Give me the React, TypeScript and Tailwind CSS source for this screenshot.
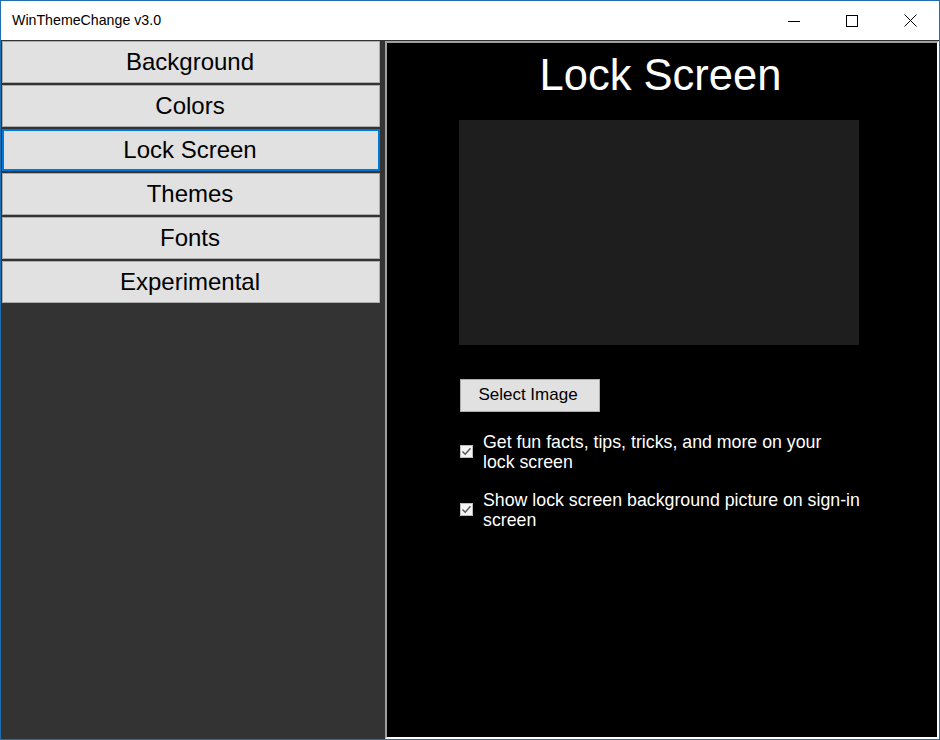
import React from "react";

const navItems = ["Background", "Colors", "Lock Screen", "Themes", "Fonts", "Experimental"];

function CheckBox() {
  return (
    <div className="w-[13px] h-[13px] bg-[#f4f4f4] border border-[#bcbcbc] flex items-center justify-center shrink-0">
      <svg width="11" height="11" viewBox="0 0 11 11">
        <path d="M1.5 5.5 L4.2 8.3 L9.5 2.2" fill="none" stroke="#555555" strokeWidth="1.4" />
      </svg>
    </div>
  );
}

export default function App() {
  return (
    <div
      className="w-[940px] h-[740px] border border-[#1f6fb2] flex flex-col bg-white overflow-hidden"
      style={{ fontFamily: '"Liberation Sans", Arial, sans-serif' }}
    >
      {/* Title bar */}
      <div className="h-[39px] flex items-center bg-white shrink-0">
        <div className="pl-[11px] text-[14.2px] text-black flex-1">WinThemeChange v3.0</div>
        <div className="flex h-full">
          <div className="w-[58px] h-full flex items-center justify-center">
            <svg width="12" height="12" viewBox="0 0 12 12">
              <path d="M0 6.5 H12" stroke="#000" strokeWidth="1" />
            </svg>
          </div>
          <div className="w-[58px] h-full flex items-center justify-center">
            <svg width="12" height="12" viewBox="0 0 12 12">
              <rect x="0.5" y="0.5" width="11" height="11" fill="none" stroke="#000" strokeWidth="1" />
            </svg>
          </div>
          <div className="w-[58px] h-full flex items-center justify-center">
            <svg width="13" height="13" viewBox="0 0 13 13">
              <path d="M0.5 0.5 L12.5 12.5 M12.5 0.5 L0.5 12.5" stroke="#000" strokeWidth="1" />
            </svg>
          </div>
        </div>
      </div>

      {/* Body */}
      <div className="flex-1 flex bg-[#333333] pt-[1px]">
        {/* Left nav */}
        <div className="w-[384px] shrink-0 flex flex-col gap-[2px] pl-[1px]">
          {navItems.map((item) => (
            <div
              key={item}
              className={
                item === "Lock Screen"
                  ? "w-[378px] h-[42px] bg-[#e1e1e1] border-2 border-[#0078d7] flex items-center justify-center pr-[2px] text-[24px] text-black"
                  : "w-[378px] h-[42px] bg-[#e1e1e1] border border-[#adadad] flex items-center justify-center pr-[2px] text-[24px] text-black"
              }
            >
              {item}
            </div>
          ))}
        </div>

        {/* Right panel */}
        <div className="flex-1 bg-black border-2 border-t-[#a0a0a0] border-l-[#a0a0a0] border-b-white border-r-white flex flex-col">
          <div className="mt-[11px] pr-[3px] text-[43.5px] leading-none text-white text-center">Lock Screen</div>
          <div className="mt-[22px] ml-[72px] w-[400px] h-[225px] bg-[#1e1e1e]" />
          <div className="mt-[34px] ml-[73px] w-[140px] h-[33px] bg-[#e1e1e1] border border-[#adadad] flex items-center justify-center pr-[4px] text-[17px] text-black">
            Select Image
          </div>
          <div className="mt-[20px] ml-[73px] flex flex-col gap-[18px]">
            <div className="flex items-center gap-[10px]">
              <CheckBox />
              <div className="text-[17.75px] leading-[20px] text-white">
                Get fun facts, tips, tricks, and more on your
                <br />
                lock screen
              </div>
            </div>
            <div className="flex items-center gap-[10px]">
              <CheckBox />
              <div className="text-[17.75px] leading-[20px] text-white">
                Show lock screen background picture on sign-in
                <br />
                screen
              </div>
            </div>
          </div>
        </div>
      </div>
    </div>
  );
}
